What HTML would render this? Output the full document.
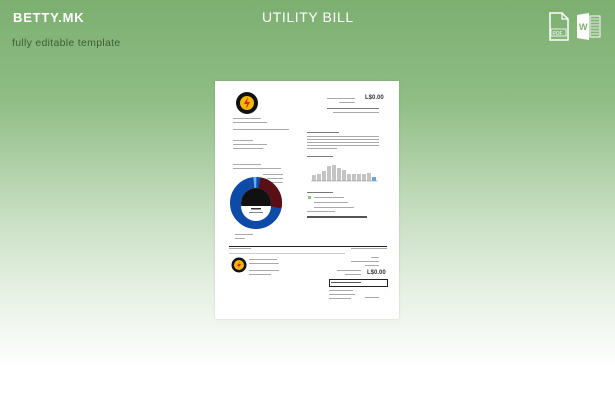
<!DOCTYPE html><html><head><style>
body{margin:0;width:615px;height:400px;overflow:hidden;font-family:"Liberation Sans",sans-serif;background:linear-gradient(#7daf71 0px,#8fbd84 100px,#c5ddbf 210px,#e6f0e3 290px,#fff 370px)}
.t{position:absolute}
.p{position:absolute;left:215px;top:81px;width:184px;height:238px;background:#fff;box-shadow:0 0 2px rgba(0,0,0,.15)}
.l{position:absolute;height:1px;background:#aaa}
.s{position:absolute;font-size:3px;color:#333;white-space:nowrap}
</style></head><body>
<div class="t" style="left:13px;top:10px;font-size:13px;font-weight:bold;color:#fff;letter-spacing:.8px">BETTY.MK</div>
<div class="t" style="left:12px;top:37px;font-size:10.5px;color:#3d5e38;letter-spacing:.3px">fully editable template</div>
<div class="t" style="left:262px;top:9px;font-size:14px;color:#fff;letter-spacing:.6px">UTILITY BILL</div>
<svg class="t" style="left:548px;top:12px" width="22" height="30"><path d="M2 1h12l6 6v21H2z" fill="none" stroke="#fff" stroke-width="1.5"/><path d="M14 1v6h6" fill="none" stroke="#fff" stroke-width="1.2"/><rect x="3" y="17" width="15" height="7" fill="none" stroke="#fff" stroke-width=".8"/><text x="4.5" y="23" font-size="5" fill="#fff" font-family="Liberation Sans">PDF</text></svg>
<svg class="t" style="left:576px;top:12px" width="26" height="30"><path d="M1 3l12-2v27L1 26z" fill="#fff"/><text x="3" y="18" font-size="9" fill="#7daf71" font-weight="bold" font-family="Liberation Sans">W</text><rect x="14" y="4" width="10" height="21" fill="none" stroke="#fff"/><path d="M15 7h8M15 10h8M15 13h8M15 16h8M15 19h8M15 22h8" stroke="#fff" stroke-width=".8"/></svg>
<div class="p">
<svg class="t" style="left:20px;top:10px" width="24" height="24"><circle cx="12" cy="12" r="11" fill="#111"/><circle cx="12" cy="12" r="7" fill="#f5b800"/><path d="M13 6l-4 7h3l-1 5 4-7h-3z" fill="#d22"/></svg>
<div class="l" style="left:18px;top:37px;width:28px"></div><div class="l" style="left:18px;top:41px;width:34px"></div>
<div class="l" style="left:18px;top:48px;width:56px"></div>
<div class="l" style="left:18px;top:59px;width:20px"></div><div class="l" style="left:18px;top:63px;width:34px"></div><div class="l" style="left:18px;top:67px;width:30px"></div>
<div class="l" style="left:112px;top:17px;width:28px"></div><div class="l" style="left:124px;top:21px;width:16px"></div>
<div class="s" style="left:150px;top:14px;font-size:6px;font-weight:bold">L$0.00</div>
<div class="l" style="left:112px;top:27px;width:52px;background:#777"></div><div class="l" style="left:118px;top:31px;width:46px"></div>
<div class="l" style="left:92px;top:51px;width:32px;background:#777"></div>
<div class="l" style="left:92px;top:55px;width:72px"></div><div class="l" style="left:92px;top:58px;width:72px"></div><div class="l" style="left:92px;top:61px;width:72px"></div><div class="l" style="left:92px;top:64px;width:72px"></div><div class="l" style="left:92px;top:67px;width:30px"></div>
<div class="l" style="left:92px;top:75px;width:26px;background:#777"></div>
<div class="l" style="left:18px;top:83px;width:28px"></div><div class="l" style="left:18px;top:87px;width:48px"></div>
<svg class="t" style="left:95px;top:80px" width="70" height="24"><g fill="#c4c4c4"><rect x="2" y="14" width="4" height="6"/><rect x="7" y="13" width="4" height="7"/><rect x="12" y="10" width="4" height="10"/><rect x="17" y="5" width="4" height="15"/><rect x="22" y="4" width="4" height="16"/><rect x="27" y="7" width="4" height="13"/><rect x="32" y="9" width="4" height="11"/><rect x="37" y="13" width="4" height="7"/><rect x="42" y="13" width="4" height="7"/><rect x="47" y="13" width="4" height="7"/><rect x="52" y="13" width="4" height="7"/><rect x="57" y="12" width="4" height="8"/></g><rect x="62" y="16" width="4" height="4" fill="#6aa6dd"/><path d="M1 20h67" stroke="#888" stroke-width=".5"/></svg>
<div class="l" style="left:48px;top:93px;width:20px"></div><div class="l" style="left:52px;top:97px;width:16px"></div><div class="l" style="left:52px;top:101px;width:16px"></div>
<svg class="t" style="left:15px;top:96px" width="58" height="58"><circle cx="26" cy="26" r="20.5" fill="none" stroke="#0e4aa8" stroke-width="11"/><circle cx="26" cy="26" r="20.5" fill="none" stroke="#5a0f16" stroke-width="11" stroke-dasharray="33 200" transform="rotate(-80 26 26)"/><circle cx="26" cy="26" r="20.5" fill="none" stroke="#6ab0e8" stroke-width="11" stroke-dasharray="2.5 200" transform="rotate(-96 26 26)"/><circle cx="26" cy="26" r="15" fill="#111"/><path d="M11 29a15 15 0 0 0 30 0z" fill="#fff"/><rect x="21" y="31" width="10" height="1.5" fill="#333"/><rect x="19" y="35" width="14" height="1" fill="#888"/></svg>
<div class="l" style="left:20px;top:153px;width:18px"></div><div class="l" style="left:20px;top:157px;width:10px"></div>
<div class="l" style="left:92px;top:111px;width:26px;background:#777"></div>
<div class="t" style="left:93px;top:115px;width:3px;height:3px;background:#8c8"></div><div class="l" style="left:99px;top:116px;width:30px"></div>
<div class="l" style="left:99px;top:121px;width:34px"></div><div class="l" style="left:99px;top:126px;width:40px"></div><div class="l" style="left:92px;top:130px;width:28px"></div>
<div class="l" style="left:92px;top:135px;width:60px;background:#555;height:1.5px"></div>
<div class="t" style="left:14px;top:165px;width:158px;height:1px;background:#222"></div>
<div class="l" style="left:14px;top:167px;width:22px"></div><div class="l" style="left:136px;top:167px;width:36px"></div>
<div class="l" style="left:14px;top:172px;width:116px;background:#ccc"></div>
<svg class="t" style="left:16px;top:176px" width="16" height="16"><circle cx="8" cy="8" r="7.5" fill="#111"/><circle cx="8" cy="8" r="5" fill="#f5b800"/><path d="M9 4l-3 5h2l-1 3 3-5H8z" fill="#d22"/></svg>
<div class="l" style="left:34px;top:178px;width:28px"></div><div class="l" style="left:34px;top:182px;width:30px"></div>
<div class="l" style="left:34px;top:189px;width:30px"></div><div class="l" style="left:34px;top:193px;width:22px"></div>
<div class="l" style="left:156px;top:176px;width:8px"></div><div class="l" style="left:136px;top:180px;width:28px"></div><div class="l" style="left:150px;top:184px;width:14px"></div>
<div class="l" style="left:122px;top:189px;width:24px"></div><div class="l" style="left:130px;top:193px;width:16px"></div>
<div class="s" style="left:152px;top:189px;font-size:6px;font-weight:bold">L$0.00</div>
<div class="t" style="left:114px;top:198px;width:57px;height:6px;border:1px solid #222"></div><div class="l" style="left:116px;top:201px;width:30px;background:#555"></div>
<div class="l" style="left:114px;top:209px;width:24px"></div><div class="l" style="left:114px;top:213px;width:26px"></div><div class="l" style="left:114px;top:217px;width:22px"></div><div class="l" style="left:150px;top:216px;width:14px"></div>
</div>
</body></html>
